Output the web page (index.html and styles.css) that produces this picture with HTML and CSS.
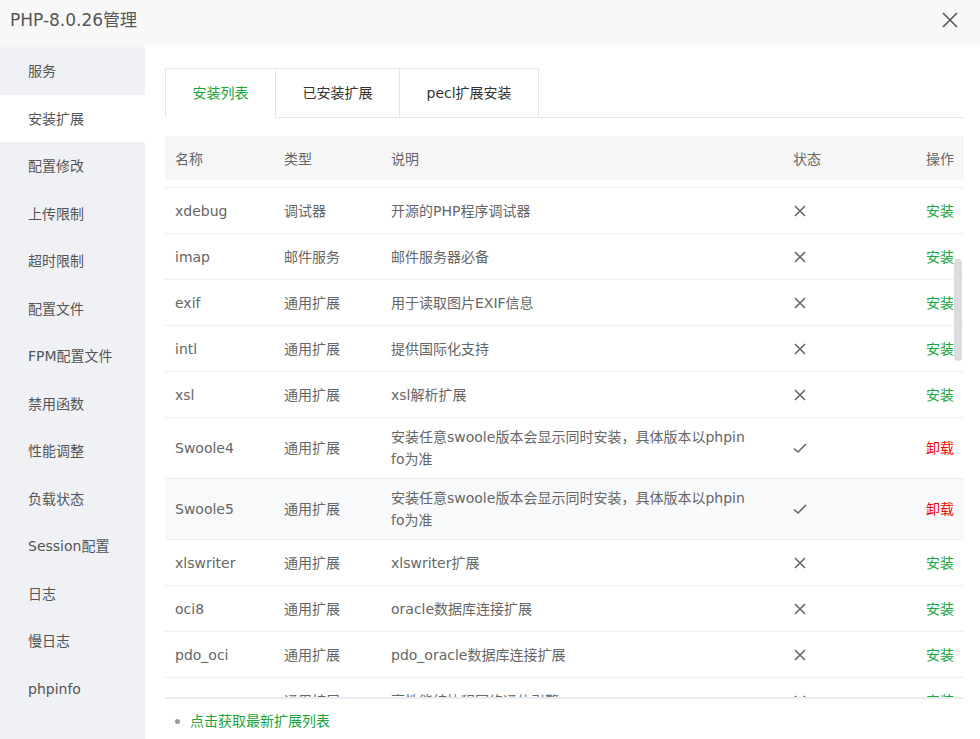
FILE: index.html
```html
<!DOCTYPE html>
<html lang="zh-CN">
<head>
  <meta charset="UTF-8">
  <title>PHP-8.0.26管理</title>
  <link rel="stylesheet" href="styles.css">
</head>
<body>
  <div class="dialog">
    <div class="dialog-head">
      <span class="dialog-title">PHP-8.0.26管理</span>
      <span class="dialog-close">
        <svg width="16" height="16" viewBox="0 0 16 16"><path d="M1 1L15 15M15 1L1 15" stroke="#555" stroke-width="1.6" fill="none"/></svg>
      </span>
    </div>

    <div class="dialog-body">
      <ul class="side-menu">
        <li>服务</li>
        <li class="active">安装扩展</li>
        <li>配置修改</li>
        <li>上传限制</li>
        <li>超时限制</li>
        <li>配置文件</li>
        <li>FPM配置文件</li>
        <li>禁用函数</li>
        <li>性能调整</li>
        <li>负载状态</li>
        <li>Session配置</li>
        <li>日志</li>
        <li>慢日志</li>
        <li>phpinfo</li>
      </ul>

      <div class="main">
        <ul class="tabs">
          <li class="on">安装列表</li>
          <li>已安装扩展</li>
          <li>pecl扩展安装</li>
        </ul>

        <div class="ext-table">
          <table class="grid grid-head">
            <colgroup><col class="c-name"><col class="c-type"><col class="c-desc"><col class="c-state"><col></colgroup>
            <thead>
              <tr><th>名称</th><th>类型</th><th>说明</th><th>状态</th><th class="op">操作</th></tr>
            </thead>
          </table>

          <div class="grid-body">
            <table class="grid">
              <colgroup><col class="c-name"><col class="c-type"><col class="c-desc"><col class="c-state"><col></colgroup>
              <tbody>
                <tr><td>opcache</td><td>缓存器</td><td class="desc">用于加速PHP脚本</td><td><svg class="no" width="12" height="12" viewBox="0 0 12 12"><path d="M1 1L11 11M11 1L1 11"/></svg></td><td class="op"><a class="install">安装</a></td></tr>
                <tr><td>xdebug</td><td>调试器</td><td class="desc">开源的PHP程序调试器</td><td><svg class="no" width="12" height="12" viewBox="0 0 12 12"><path d="M1 1L11 11M11 1L1 11"/></svg></td><td class="op"><a class="install">安装</a></td></tr>
                <tr><td>imap</td><td>邮件服务</td><td class="desc">邮件服务器必备</td><td><svg class="no" width="12" height="12" viewBox="0 0 12 12"><path d="M1 1L11 11M11 1L1 11"/></svg></td><td class="op"><a class="install">安装</a></td></tr>
                <tr><td>exif</td><td>通用扩展</td><td class="desc">用于读取图片EXIF信息</td><td><svg class="no" width="12" height="12" viewBox="0 0 12 12"><path d="M1 1L11 11M11 1L1 11"/></svg></td><td class="op"><a class="install">安装</a></td></tr>
                <tr><td>intl</td><td>通用扩展</td><td class="desc">提供国际化支持</td><td><svg class="no" width="12" height="12" viewBox="0 0 12 12"><path d="M1 1L11 11M11 1L1 11"/></svg></td><td class="op"><a class="install">安装</a></td></tr>
                <tr><td>xsl</td><td>通用扩展</td><td class="desc">xsl解析扩展</td><td><svg class="no" width="12" height="12" viewBox="0 0 12 12"><path d="M1 1L11 11M11 1L1 11"/></svg></td><td class="op"><a class="install">安装</a></td></tr>
                <tr><td>Swoole4</td><td>通用扩展</td><td class="desc">安装任意swoole版本会显示同时安装，具体版本以phpinfo为准</td><td><svg class="yes" width="14" height="12" viewBox="0 0 14 12"><path d="M1 6.5L5 10L13 2"/></svg></td><td class="op"><a class="remove">卸载</a></td></tr>
                <tr class="hover"><td>Swoole5</td><td>通用扩展</td><td class="desc">安装任意swoole版本会显示同时安装，具体版本以phpinfo为准</td><td><svg class="yes" width="14" height="12" viewBox="0 0 14 12"><path d="M1 6.5L5 10L13 2"/></svg></td><td class="op"><a class="remove">卸载</a></td></tr>
                <tr><td>xlswriter</td><td>通用扩展</td><td class="desc">xlswriter扩展</td><td><svg class="no" width="12" height="12" viewBox="0 0 12 12"><path d="M1 1L11 11M11 1L1 11"/></svg></td><td class="op"><a class="install">安装</a></td></tr>
                <tr><td>oci8</td><td>通用扩展</td><td class="desc">oracle数据库连接扩展</td><td><svg class="no" width="12" height="12" viewBox="0 0 12 12"><path d="M1 1L11 11M11 1L1 11"/></svg></td><td class="op"><a class="install">安装</a></td></tr>
                <tr><td>pdo_oci</td><td>通用扩展</td><td class="desc">pdo_oracle数据库连接扩展</td><td><svg class="no" width="12" height="12" viewBox="0 0 12 12"><path d="M1 1L11 11M11 1L1 11"/></svg></td><td class="op"><a class="install">安装</a></td></tr>
                <tr><td>swow</td><td>通用扩展</td><td class="desc">高性能纯协程网络通信引擎</td><td><svg class="no" width="12" height="12" viewBox="0 0 12 12"><path d="M1 1L11 11M11 1L1 11"/></svg></td><td class="op"><a class="install">安装</a></td></tr>
              </tbody>
            </table>
            <div class="scroll-thumb"></div>
          </div>
        </div>

        <ul class="help">
          <li><a>点击获取最新扩展列表</a></li>
        </ul>
      </div>
    </div>
  </div>
</body>
</html>
```

FILE: styles.css
```css
body {
  margin: 0;
  font-family: "DejaVu Sans", "Noto Sans CJK SC", sans-serif;
  font-size: 14px;
  color: #666;
  background: #fff;
}

ul {
  margin: 0;
  padding: 0;
  list-style: none;
}

.dialog {
  width: 980px;
  height: 739px;
  display: flex;
  flex-direction: column;
  overflow: hidden;
}

.dialog-head {
  height: 47px;
  flex-shrink: 0;
  box-sizing: border-box;
  background: #f8f8f8;
  display: flex;
  align-items: flex-start;
  justify-content: space-between;
  padding: 8px 22px 0 10px;
}

.dialog-title {
  font-size: 17px;
  line-height: 24px;
  color: #555;
}

.dialog-close {
  display: flex;
  padding-top: 4px;
}

.dialog-body {
  flex: 1;
  display: flex;
  min-height: 0;
}

.side-menu {
  width: 145px;
  flex-shrink: 0;
  background: #f0f1f5;
}

.side-menu li {
  height: 47.5px;
  line-height: 49px;
  padding-left: 28px;
  color: #555;
}

.side-menu li.active {
  background: #fff;
}

.main {
  flex: 1;
  padding: 21px 16px 0 20px;
  min-width: 0;
}

.tabs {
  display: flex;
  border-bottom: 1px solid #e6e6e6;
}

.tabs li {
  height: 48px;
  line-height: 48px;
  padding: 0 26.5px;
  border: 1px solid #e6e6e6;
  border-right: none;
  margin-bottom: -1px;
  color: #333;
  background: #fff;
}

.tabs li:last-child {
  border-right: 1px solid #e6e6e6;
}

.tabs li.on {
  color: #20a53a;
  border-bottom-color: #fff;
}

.ext-table {
  margin-top: 18px;
  border-bottom: 2px solid #e9ecf0;
}

.grid {
  width: 100%;
  border-collapse: collapse;
  table-layout: fixed;
}

.c-name { width: 109px; }
.c-type { width: 107px; }
.c-desc { width: 402px; }
.c-state { width: 100px; }

.grid th {
  height: 44px;
  background: #f6f6f6;
  font-weight: normal;
  text-align: left;
  padding: 0 10px;
  color: #666;
}

.grid td {
  height: 29px;
  padding: 8px 10px;
  border-bottom: 1px solid #ebeef5;
  line-height: 22px;
  word-break: break-all;
  vertical-align: middle;
}

.grid td.desc {
  padding-right: 35px;
}

.grid tr.hover td {
  background: #f8f9fb;
}

.grid .op {
  text-align: right;
}

.grid-body {
  height: 517px;
  overflow: hidden;
  position: relative;
}

.grid-body .grid {
  margin-top: -38px;
}

.no, .yes {
  display: block;
  fill: none;
  stroke: #666;
  stroke-width: 1.6;
}

.no {
  margin-left: 1px;
}

.install {
  color: #20a53a;
}

.remove {
  color: #ef0808;
}

.scroll-thumb {
  position: absolute;
  right: 2px;
  top: 79px;
  width: 8px;
  height: 102px;
  border-radius: 4px;
  background: #dcdcdf;
}

.help {
  padding: 11px 0 0 10px;
}

.help li {
  line-height: 22px;
  display: flex;
  align-items: center;
}

.help li::before {
  content: "";
  width: 5px;
  height: 5px;
  border-radius: 50%;
  background: #999;
  margin-right: 10px;
}

.help a {
  color: #20a53a;
}
```
